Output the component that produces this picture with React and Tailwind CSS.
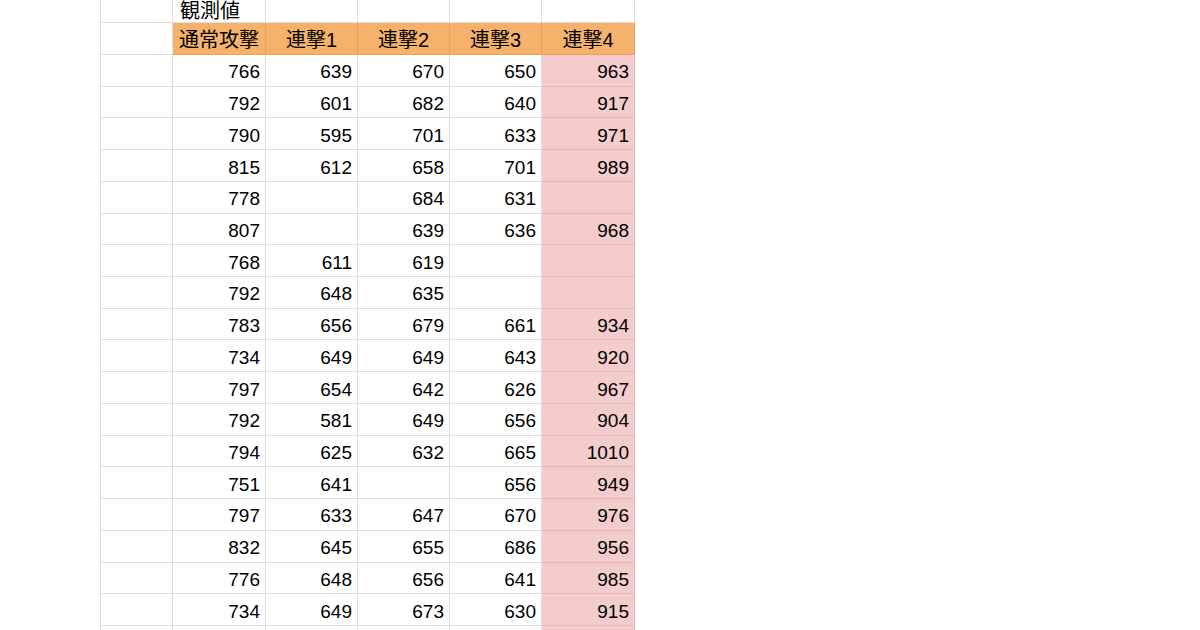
const ROWS = [
  [766, 639, 670, 650, 963],
  [792, 601, 682, 640, 917],
  [790, 595, 701, 633, 971],
  [815, 612, 658, 701, 989],
  [778, '', 684, 631, ''],
  [807, '', 639, 636, 968],
  [768, 611, 619, '', ''],
  [792, 648, 635, '', ''],
  [783, 656, 679, 661, 934],
  [734, 649, 649, 643, 920],
  [797, 654, 642, 626, 967],
  [792, 581, 649, 656, 904],
  [794, 625, 632, 665, 1010],
  [751, 641, '', 656, 949],
  [797, 633, 647, 670, 976],
  [832, 645, 655, 686, 956],
  [776, 648, 656, 641, 985],
  [734, 649, 673, 630, 915],
  ['', '', '', '', ''],
]

const HEAD = ['通常攻撃', '連撃1', '連撃2', '連撃3', '連撃4']
const W = ['w-[93px]', 'w-[92px]', 'w-[92px]', 'w-[92px]', 'w-[93px]']

export default function App() {
  return (
    <div
      className="w-[1200px] h-[630px] overflow-hidden bg-white text-black text-[19px] leading-none"
      style={{ fontFamily: '"Liberation Sans", Arial, "Noto Sans CJK JP", sans-serif' }}
    >
      <div className="ml-[100px] w-[535px] border-l border-[#dedede]">
        {/* title row */}
        <div className="flex h-[23px] border-b border-[#dedede]">
          <div className="w-[72px] border-r border-[#dedede]" />
          {W.map((w, i) => (
            <div key={i} className={`${w} border-r border-[#dedede] flex items-center pl-[7px] text-[20px]`}>
              {i === 0 ? '観測値' : ''}
            </div>
          ))}
        </div>

        {/* header row */}
        <div className="flex h-[32px]">
          <div className="w-[72px] border-r border-b border-[#dedede]" />
          {HEAD.map((h, i) => (
            <div
              key={h}
              className={`${W[i]} bg-[#f6b26b] border-r border-b border-[#e3a25e] flex items-center justify-center pt-[3px] text-[20px]`}
            >
              {h}
            </div>
          ))}
        </div>

        {/* data rows */}
        {ROWS.map((r, ri) => (
          <div key={ri} className="flex h-[31.72px]">
            <div className="w-[72px] border-r border-b border-[#dedede]" />
            {r.map((v, i) => (
              <div
                key={i}
                className={
                  i === 4
                    ? `${W[i]} bg-[#f4cccc] border-r border-b border-[#e2b8b8] flex items-center justify-end pr-[5px] pt-[3px]`
                    : `${W[i]} border-r border-b border-[#dedede] flex items-center justify-end pr-[5px] pt-[3px]`
                }
              >
                {v}
              </div>
            ))}
          </div>
        ))}
      </div>
    </div>
  )
}
